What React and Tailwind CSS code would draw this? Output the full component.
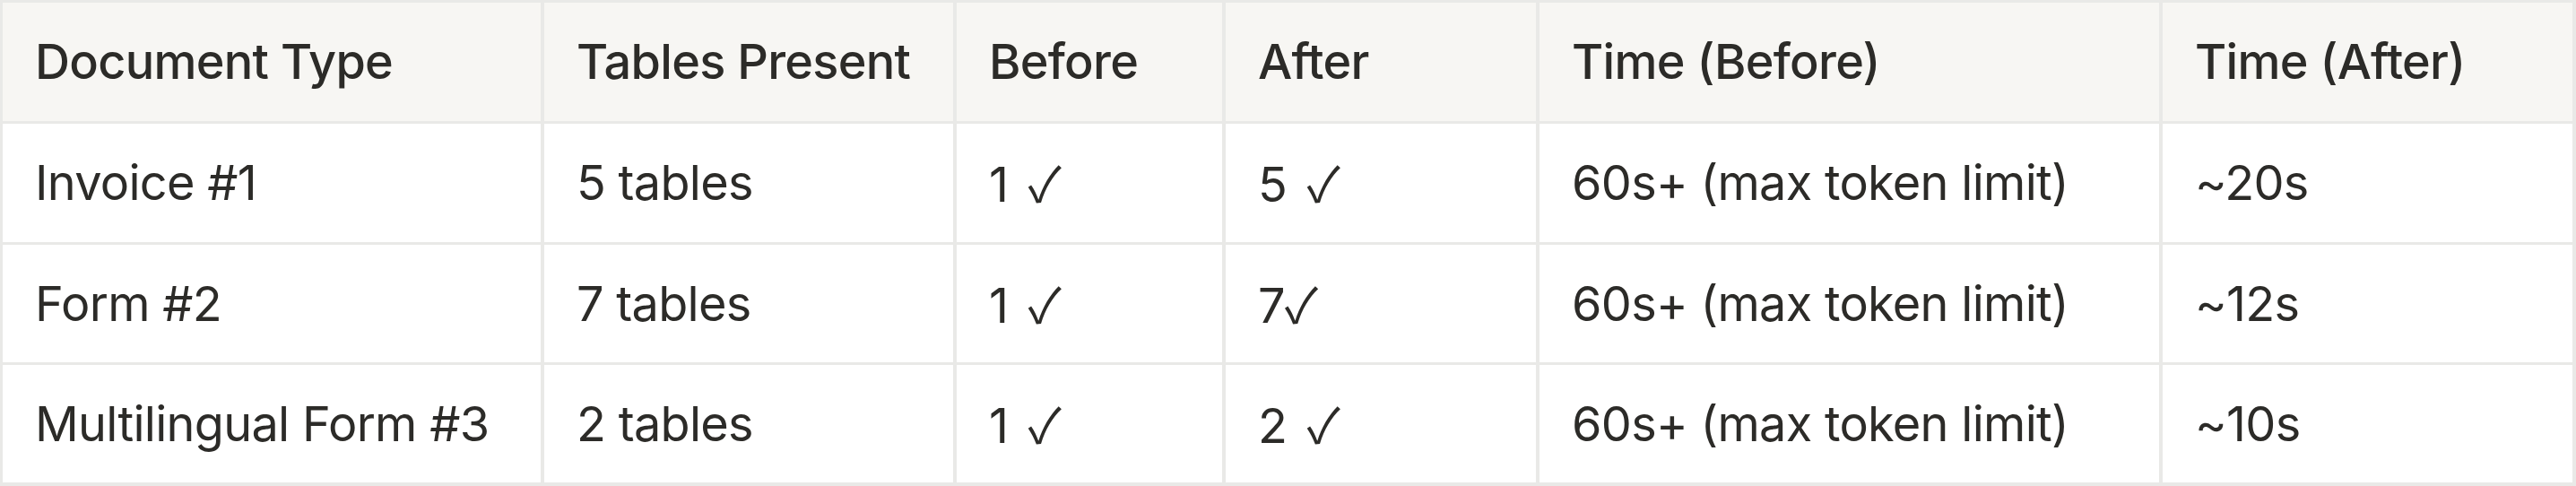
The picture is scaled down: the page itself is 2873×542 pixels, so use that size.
import React from "react";

const headers = [
  "Document Type",
  "Tables Present",
  "Before",
  "After",
  "Time (Before)",
  "Time (After)",
];

const rows = [
  ["Invoice #1", "5 tables", "1 ✓", "5 ✓", "60s+ (max token limit)", "~20s"],
  ["Form #2", "7 tables", "1 ✓", "7✓", "60s+ (max token limit)", "~12s"],
  ["Multilingual Form #3", "2 tables", "1 ✓", "2 ✓", "60s+ (max token limit)", "~10s"],
];

// the tick comes from the CJK face, whose check is a thin even stroke
const Cell = ({ text }) => {
  if (!text.includes("✓")) return <span>{text}</span>;
  const [lead] = text.split("✓");
  return (
    <span>
      {lead}
      <span className={"font-['Noto_Sans_CJK_JP',sans-serif]" + (lead.endsWith(" ") ? " ml-[8px]" : "")}>
        ✓
      </span>
    </span>
  );
};

const App = () => {
  return (
    <div className="w-[2873px] h-[542px] bg-[#e9e9e7] grid grid-cols-[600px_456px_296px_346px_691px_457px] grid-rows-[132px_132px_131px_131px] gap-x-[4px] gap-y-[3px] pl-[3px] pr-[4px] pt-[3px] pb-[4px] text-[#2c2b28] text-[54px] leading-[66px] tracking-[-0.7px] font-['Inter','Noto_Sans',sans-serif]">
      {headers.map((h) => (
        <div key={h} className="bg-[#f7f6f3] flex items-center pl-[36px] font-medium">
          {h}
        </div>
      ))}
      {rows.map((row, i) =>
        row.map((cell, j) => (
          <div key={i + "-" + j} className="bg-white flex items-center pl-[36px]">
            <Cell text={cell} />
          </div>
        ))
      )}
    </div>
  );
};

export default App;
